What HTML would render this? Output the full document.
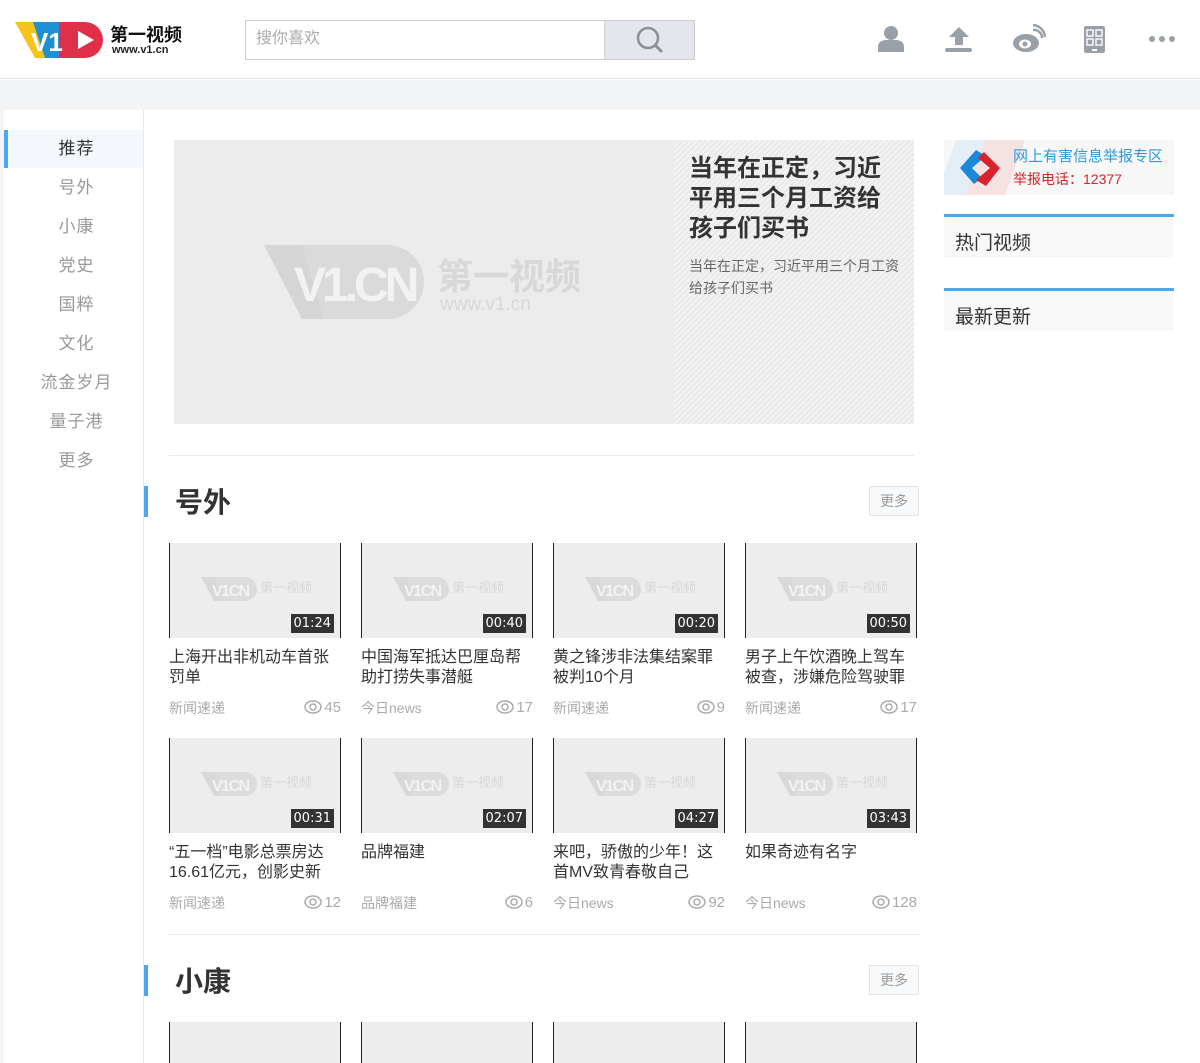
<!DOCTYPE html>
<html><head><meta charset="utf-8">
<style>
*{margin:0;padding:0;box-sizing:border-box}
body{width:1200px;height:1063px;overflow:hidden;background:#fff;font-family:"Liberation Sans","Noto Sans CJK SC",sans-serif;position:relative}
.a{position:absolute}
.nav{position:absolute;left:7px;width:139px;text-align:center;font-size:17px;color:#999;height:39px;line-height:39px;letter-spacing:1px}
.th{position:absolute;width:172px;height:95px;background:#ededed;border-left:1px solid #222;border-right:1px solid #222}
.dur{position:absolute;right:6px;bottom:5px;background:#333;color:#fff;font-size:13px;line-height:19px;padding:0 3px;font-family:"DejaVu Sans",sans-serif}
.tt{position:absolute;width:172px;font-size:16px;line-height:20px;color:#333;top:0}
.mt{position:absolute;width:172px;font-size:14px;color:#aaa;line-height:18px}
.mt span{position:absolute;right:0;top:0;font-size:15px}
.mt svg{vertical-align:-3px;margin-right:1px}
.more{position:absolute;width:50px;height:30px;border:1px solid #e2e5e8;background:#f7f9fb;border-radius:2px;font-size:14px;color:#999;text-align:center;line-height:28px}
.hd{position:absolute;font-size:28px;color:#333;font-weight:bold}
.bar{position:absolute;left:144px;width:4px;height:31px;background:#4aa8f0}
</style></head><body>
<svg width="0" height="0" style="position:absolute"><defs>
<g id="w"><polygon points="0,0 20,0 21,24 13,24" fill="#d8d8d8"/><path d="M13,0 H44 A12,12 0 0 1 44,24 H21Z" fill="#dcdcdc"/><text x="11" y="19" font-size="16" font-weight="bold" fill="#f3f3f3" font-family="Liberation Sans" letter-spacing="-1.5">V1CN</text><text x="59" y="15" font-size="13" fill="#d8d8d8" font-family="Noto Sans CJK SC">第一视频</text></g>
<g id="eye"><ellipse cx="9" cy="8" rx="8" ry="6" fill="none" stroke="#aaa" stroke-width="1.5"/><circle cx="9" cy="8" r="3" fill="none" stroke="#aaa" stroke-width="1.5"/></g>
</defs></svg>
<!-- header -->
<div class="a" style="left:0;top:0;width:1200px;height:79px;border-bottom:1px solid #e6e6e6;background:#fff"></div>
<svg class="a" style="left:15px;top:20px" width="90" height="40" viewBox="0 0 90 40">
<polygon points="0,2 30,2 34,38 20,38" fill="#f6c21c"/>
<polygon points="18,2 44,2 44,38 30,38" fill="#1f8fd3"/>
<path d="M44,2 H70 A18,18 0 0 1 70,38 H44Z" fill="#e03049"/>
<text x="16" y="31" font-size="26" font-weight="bold" fill="#fff" font-family="Liberation Sans">V1</text>
<polygon points="63,11 79,20 63,29" fill="#fff"/>
</svg>
<div class="a" style="left:110px;top:23px;font-size:18px;font-weight:bold;color:#111;line-height:24px">第一视频</div>
<div class="a" style="left:112px;top:44px;font-size:11px;font-weight:bold;color:#222">www.v1.cn</div>
<div class="a" style="left:245px;top:20px;width:360px;height:40px;border:1px solid #ccc;background:#fff;font-size:16px;color:#aaa;padding:3px 10px">搜你喜欢</div>
<div class="a" style="left:604px;top:20px;width:91px;height:40px;border:1px solid #ccc;background:#e3e6ea"></div>
<svg class="a" style="left:634px;top:25px" width="32" height="30"><circle cx="14" cy="13" r="10" fill="none" stroke="#8a9099" stroke-width="2.5"/><line x1="21" y1="20" x2="28" y2="27" stroke="#8a9099" stroke-width="3"/></svg>
<svg class="a" style="left:876px;top:24px" width="30" height="30"><circle cx="15" cy="9" r="7" fill="#9aa0a8"/><path d="M2,28 V23 Q2,17 9,16 H21 Q28,17 28,23 V28Z" fill="#9aa0a8"/></svg>
<svg class="a" style="left:944px;top:24px" width="30" height="30"><path d="M15,3 L25,13 H19 V21 H11 V13 H5Z" fill="#9aa0a8"/><rect x="1" y="24" width="27" height="4" rx="2" fill="#9aa0a8"/></svg>
<svg class="a" style="left:1012px;top:24px" width="34" height="30"><ellipse cx="14" cy="19" rx="13" ry="9" fill="#9aa0a8"/><ellipse cx="13" cy="20" rx="6" ry="4.5" fill="#fff"/><circle cx="13" cy="20" r="2.5" fill="#9aa0a8"/><path d="M21,6 A8,8 0 0 1 30,14" stroke="#9aa0a8" stroke-width="2.5" fill="none"/><path d="M21,1 A13,13 0 0 1 33,13" stroke="#9aa0a8" stroke-width="2.5" fill="none"/></svg>
<svg class="a" style="left:1084px;top:26px" width="22" height="28"><rect x="0" y="0" width="21" height="27" rx="2" fill="#9aa0a8"/><rect x="3" y="4" width="6" height="6" fill="none" stroke="#fff" stroke-width="1.4"/><rect x="12" y="4" width="6" height="6" fill="none" stroke="#fff" stroke-width="1.4"/><rect x="3" y="13" width="6" height="6" fill="none" stroke="#fff" stroke-width="1.4"/><rect x="12" y="13" width="6" height="6" fill="none" stroke="#fff" stroke-width="1.4"/><rect x="8" y="23" width="5" height="2" fill="#fff"/></svg>
<svg class="a" style="left:1148px;top:34px" width="30" height="10"><circle cx="4" cy="5" r="3" fill="#9aa0a8"/><circle cx="14" cy="5" r="3" fill="#9aa0a8"/><circle cx="24" cy="5" r="3" fill="#9aa0a8"/></svg>
<!-- gray band -->
<div class="a" style="left:0;top:80px;width:1200px;height:30px;background:#f3f4f6"></div>
<div class="a" style="left:0;top:110px;width:4px;height:953px;background:#f3f4f6"></div>
<div class="a" style="left:143px;top:110px;width:1px;height:953px;background:#e8e8e8"></div>
<!-- sidebar -->
<div class="a" style="left:4px;top:130px;width:139px;height:38px;background:#f3f7fb"></div>
<div class="a" style="left:4px;top:130px;width:4px;height:38px;background:#4aa8f0"></div>
<div class="nav" style="top:129px;color:#333">推荐</div>
<div class="nav" style="top:168px">号外</div>
<div class="nav" style="top:207px">小康</div>
<div class="nav" style="top:246px">党史</div>
<div class="nav" style="top:285px">国粹</div>
<div class="nav" style="top:324px">文化</div>
<div class="nav" style="top:363px">流金岁月</div>
<div class="nav" style="top:402px">量子港</div>
<div class="nav" style="top:441px">更多</div>
<!-- hero -->
<div class="a" style="left:174px;top:140px;width:500px;height:284px;background:#ececec"></div>
<svg class="a" style="left:262px;top:243px" width="330" height="80">
<polygon points="2,2 60,2 62,76 40,76" fill="#d5d5d5"/>
<path d="M40,2 H125 A37,37 0 0 1 125,76 H62Z" fill="#dadada"/>
<text x="32" y="58" font-size="48" font-weight="bold" fill="#f2f2f2" font-family="Liberation Sans" letter-spacing="-4">V1.CN</text>
<text x="175" y="46" font-size="36" fill="#d8d8d8" font-family="Noto Sans CJK SC" font-weight="bold">第一视频</text>
<text x="178" y="67" font-size="19" fill="#d8d8d8" font-family="Liberation Sans">www.v1.cn</text>
</svg>
<div class="a" style="left:674px;top:140px;width:240px;height:284px;background:repeating-linear-gradient(135deg,#f3f3f3 0 2px,#e9e9e9 2px 4px)"></div>
<div class="a" style="left:689px;top:154px;width:205px;font-size:24px;line-height:30px;font-weight:bold;color:#333">当年在正定，习近平用三个月工资给孩子们买书</div>
<div class="a" style="left:689px;top:255px;width:212px;font-size:14px;line-height:22px;color:#666">当年在正定，习近平用三个月工资给孩子们买书</div>
<div class="a" style="left:169px;top:455px;width:745px;height:1px;background:#ebebeb"></div>
<!-- section 1 -->
<div class="bar" style="top:486px"></div>
<div class="hd" style="left:175px;top:481px">号外</div>
<div class="more" style="left:869px;top:486px">更多</div>

<div class="th" style="left:169px;top:543px"><div class="dur">01:24</div></div>
<div class="th" style="left:361px;top:543px"><div class="dur">00:40</div></div>
<div class="th" style="left:553px;top:543px"><div class="dur">00:20</div></div>
<div class="th" style="left:745px;top:543px"><div class="dur">00:50</div></div>
<div class="tt" style="left:169px;top:648px">上海开出非机动车首张罚单</div>
<div class="tt" style="left:361px;top:648px">中国海军抵达巴厘岛帮助打捞失事潜艇</div>
<div class="tt" style="left:553px;top:648px">黄之锋涉非法集结案罪被判10个月</div>
<div class="tt" style="left:745px;top:648px">男子上午饮酒晚上驾车被查，涉嫌危险驾驶罪</div>
<div class="mt" style="left:169px;top:699px">新闻速递<span><svg width="19" height="16"><use href="#eye"/></svg>45</span></div>
<div class="mt" style="left:361px;top:699px">今日news<span><svg width="19" height="16"><use href="#eye"/></svg>17</span></div>
<div class="mt" style="left:553px;top:699px">新闻速递<span><svg width="19" height="16"><use href="#eye"/></svg>9</span></div>
<div class="mt" style="left:745px;top:699px">新闻速递<span><svg width="19" height="16"><use href="#eye"/></svg>17</span></div>

<div class="th" style="left:169px;top:738px"><div class="dur">00:31</div></div>
<div class="th" style="left:361px;top:738px"><div class="dur">02:07</div></div>
<div class="th" style="left:553px;top:738px"><div class="dur">04:27</div></div>
<div class="th" style="left:745px;top:738px"><div class="dur">03:43</div></div>
<div class="tt" style="left:169px;top:843px">“五一档”电影总票房达16.61亿元，创影史新</div>
<div class="tt" style="left:361px;top:843px">品牌福建</div>
<div class="tt" style="left:553px;top:843px">来吧，骄傲的少年！这首MV致青春敬自己</div>
<div class="tt" style="left:745px;top:843px">如果奇迹有名字</div>
<div class="mt" style="left:169px;top:894px">新闻速递<span><svg width="19" height="16"><use href="#eye"/></svg>12</span></div>
<div class="mt" style="left:361px;top:894px">品牌福建<span><svg width="19" height="16"><use href="#eye"/></svg>6</span></div>
<div class="mt" style="left:553px;top:894px">今日news<span><svg width="19" height="16"><use href="#eye"/></svg>92</span></div>
<div class="mt" style="left:745px;top:894px">今日news<span><svg width="19" height="16"><use href="#eye"/></svg>128</span></div>
<div class="a" style="left:169px;top:934px;width:750px;height:1px;background:#ebebeb"></div>
<!-- section 2 -->
<div class="bar" style="top:965px"></div>
<div class="hd" style="left:175px;top:960px">小康</div>
<div class="more" style="left:869px;top:965px">更多</div>
<div class="th" style="left:169px;top:1022px;height:41px"></div>
<div class="th" style="left:361px;top:1022px;height:41px"></div>
<div class="th" style="left:553px;top:1022px;height:41px"></div>
<div class="th" style="left:745px;top:1022px;height:41px"></div>

<svg class="a" style="left:201px;top:577px" width="115" height="26"><use href="#w"/></svg>
<svg class="a" style="left:393px;top:577px" width="115" height="26"><use href="#w"/></svg>
<svg class="a" style="left:585px;top:577px" width="115" height="26"><use href="#w"/></svg>
<svg class="a" style="left:777px;top:577px" width="115" height="26"><use href="#w"/></svg>
<svg class="a" style="left:201px;top:772px" width="115" height="26"><use href="#w"/></svg>
<svg class="a" style="left:393px;top:772px" width="115" height="26"><use href="#w"/></svg>
<svg class="a" style="left:585px;top:772px" width="115" height="26"><use href="#w"/></svg>
<svg class="a" style="left:777px;top:772px" width="115" height="26"><use href="#w"/></svg>
<!-- right column -->
<div class="a" style="left:944px;top:140px;width:230px;height:55px;background:#f7f7f7;overflow:hidden">
<div class="a" style="left:2px;top:0;width:40px;height:55px;background:#e3eef6;transform:skewX(-20deg)"></div>
<div class="a" style="left:31px;top:0;width:40px;height:55px;background:#f6e1e3;transform:skewX(-20deg)"></div>
</div>
<svg class="a" style="left:956px;top:148px" width="48" height="40"><polygon points="20,2 30,8 16,20 26,30 18,36 4,20" fill="#1a8ad8"/><polygon points="28,4 44,20 30,38 20,32 34,20 22,10" fill="#d8232a"/></svg>
<div class="a" style="left:1013px;top:147px;font-size:15px;color:#2f9ad8;line-height:20px">网上有害信息举报专区</div>
<div class="a" style="left:1013px;top:169px;font-size:14px;color:#d8232a;line-height:20px">举报电话：12377</div>
<div class="a" style="left:944px;top:214px;width:230px;height:3px;background:#4aa8f0"></div>
<div class="a" style="left:944px;top:217px;width:230px;height:41px;background:#f8f8f8;font-size:19px;color:#333;padding:11px 0 0 11px">热门视频</div>
<div class="a" style="left:944px;top:288px;width:230px;height:3px;background:#4aa8f0"></div>
<div class="a" style="left:944px;top:291px;width:230px;height:40px;background:#f8f8f8;font-size:19px;color:#333;padding:11px 0 0 11px">最新更新</div>
</body></html>
